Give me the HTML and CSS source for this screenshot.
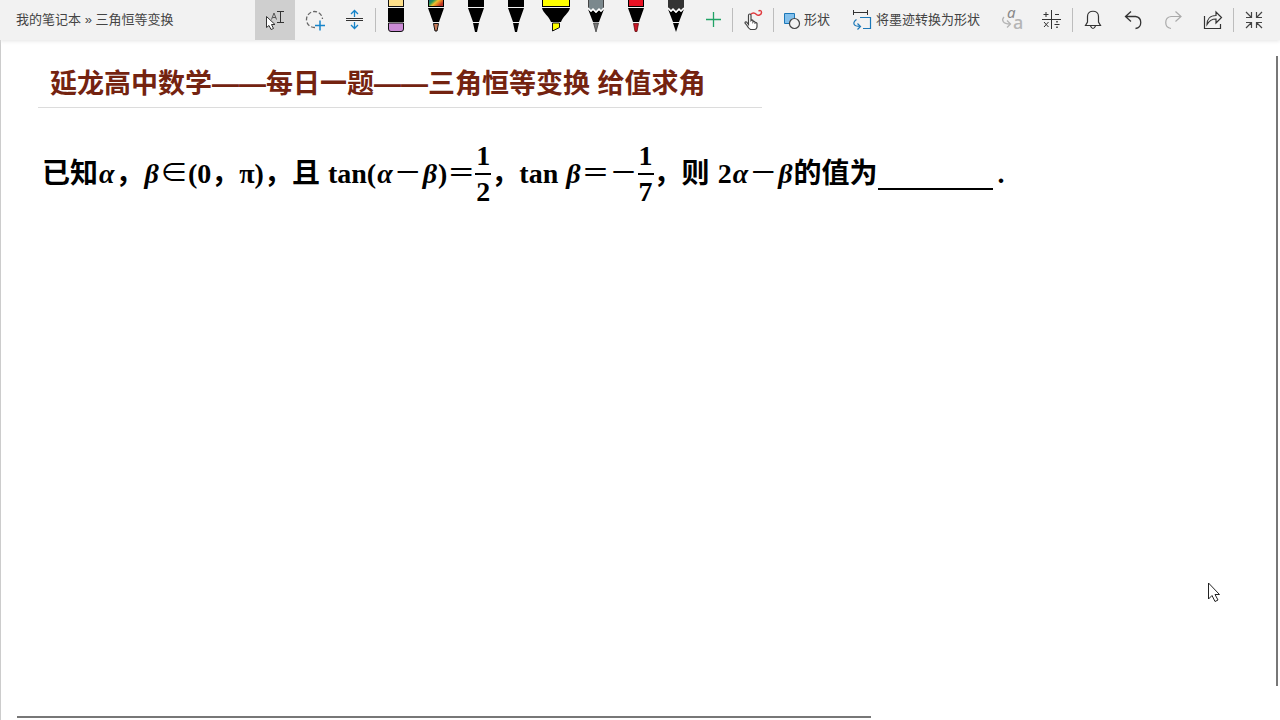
FILE: index.html
```html
<!DOCTYPE html>
<html lang="zh-CN">
<head>
<meta charset="utf-8">
<title>三角恒等变换</title>
<link rel="stylesheet" href="styles.css">
</head>
<body>
<header class="toolbar">
  <nav class="breadcrumb"><a href="#">我的笔记本</a> » <a href="#">三角恒等变换</a></nav>
  <button class="tool selected" aria-label="选择文本"><svg width="40" height="40" viewBox="0 0 40 40" fill="none" stroke="#333"><path d="M16.500 19.500l2.500-6.500 2.500 6.500M17.500 17.500h3.500" stroke="#555"/><path d="M11.500 16.500v11l2.500-2 2 4 2.500-1-2-4h3.500z" fill="#fff"/><path d="M22 11.500h7M22 22.500h7M25.500 11.500v11"/></svg></button>
  <button class="tool" aria-label="套索选择"><svg width="40" height="40" viewBox="0 0 40 40" fill="none"><circle cx="19.500" cy="19.500" r="8" stroke="#666" stroke-width="1.300" stroke-dasharray="4 2"/><path d="M20 19h10v11H20z" fill="#f2f2f2"/><path d="M25 20.500v10M20 25.500h10" stroke="#1684c9" stroke-width="1.500"/></svg></button>
  <button class="tool" aria-label="插入空间"><svg width="40" height="40" viewBox="0 0 40 40" fill="none"><path d="M11 18.500h17M11 20.500h17" stroke="#333"/><path d="M19.500 17v-6.500M16 14l3.500-3.500L23 14M19.500 22v6.500M16 25l3.500 3.500L23 25" stroke="#1684c9" stroke-width="1.300"/></svg></button>
  <span class="sep"></span>
  <button class="tool" aria-label="橡皮擦"><svg width="40" height="40" viewBox="0 0 40 40"><path d="M12 0h16v7H12z" fill="#111"/><path d="M13 0h14v6H13z" fill="#ffe08a"/><path d="M12 8h16v14H12z"/><path d="M12.500 23h15v6q0 2.500-2.500 2.500H15q-2.500 0-2.500-2.500z" fill="#cb8bd6" stroke="#111"/></svg></button>
  <button class="tool" aria-label="彩虹笔"><svg width="40" height="40" viewBox="0 0 40 40"><defs><linearGradient id="rainbow" x1="0" x2="1" y1="0" y2=".5"><stop stop-color="#1c6188"/><stop offset=".3" stop-color="#2c9a55"/><stop offset=".55" stop-color="#f0c02b"/><stop offset=".8" stop-color="#e06c25"/><stop offset="1" stop-color="#b93327"/></linearGradient></defs><path d="M12 0h16v7H12z"/><path d="M13 0h14v6H13z" fill="url(#rainbow)"/><path d="M12 8h16l-5 14h-6z"/><path d="M17.500 23.500h5L21 31h-2z" fill="#c77a58" stroke="#111"/></svg></button>
  <button class="tool" aria-label="黑色笔一"><svg width="40" height="40" viewBox="0 0 40 40"><path d="M12 0h16v7H12zM12 8h16l-5 14h-6zM17 23h6l-2 9h-2z"/></svg></button>
  <button class="tool" aria-label="黑色笔二"><svg width="40" height="40" viewBox="0 0 40 40"><path d="M12 0h16v7H12zM12 8h16l-5 14h-6zM17 23h6l-2 9h-2z"/></svg></button>
  <button class="tool" aria-label="黄色荧光笔"><svg width="40" height="40" viewBox="0 0 40 40"><path d="M6 0h28v7H6z"/><path d="M7 0h26v6H7z" fill="#ff0"/><path d="M6 8h28c-1 5-7 8-9 14H15C13 16 7 13 6 8z"/><path d="M16.500 23v8l7-3.500V23z" fill="#ff0" stroke="#111"/></svg></button>
  <button class="tool" aria-label="灰色铅笔"><svg width="40" height="40" viewBox="0 0 40 40"><path d="M12 0h16v8l-3 3-2-2-3 3-3-3-2 2-3-3z" fill="#7b888d"/><path d="M12.500 0v8M27.500 0v8" stroke="#444"/><path d="M12 9l3 3 2-2 3 3 3-3 2 2 3-3-5 13h-6z"/><path d="M12 8l3 3 2-2 3 3 3-3 2 2 3-3" fill="none" stroke="#fff" stroke-width="1.500"/><path d="M17.500 23h5L20 32z" fill="#777" stroke="#333" stroke-width=".7"/></svg></button>
  <button class="tool" aria-label="红色笔"><svg width="40" height="40" viewBox="0 0 40 40"><path d="M12 0h16v7H12z"/><path d="M13 0h14v6H13z" fill="#e81123"/><path d="M12 8h16l-5 14h-6z"/><path d="M17.500 23.500h5L21 31.500h-2z" fill="#c91626" stroke="#500" stroke-width=".7"/></svg></button>
  <button class="tool" aria-label="黑色铅笔"><svg width="40" height="40" viewBox="0 0 40 40"><path d="M12 0h16v8l-3 3-2-2-3 3-3-3-2 2-3-3z" fill="#333"/><path d="M12 9l3 3 2-2 3 3 3-3 2 2 3-3-5 13h-6zM17 23h6l-3 9z"/><path d="M12 8l3 3 2-2 3 3 3-3 2 2 3-3" fill="none" stroke="#fff" stroke-width="1.500"/></svg></button>
  <button class="tool add" aria-label="添加笔"><svg width="36" height="40" viewBox="0 0 36 40"><path d="M10 19.500h15M17.500 12v15" stroke="#21a366" stroke-width="1.300"/></svg></button>
  <span class="sep"></span>
  <button class="tool" aria-label="用手指绘制"><svg width="40" height="40" viewBox="0 0 40 40" fill="none"><path d="M17.500 14.500c2.500-2.500 4.500-1.500 6 0s5 .5 5-2-2-2-3-1.500" stroke="#e03a3e" stroke-width="1.500"/><path d="M15.500 24.500v-9q0-1.500 1.200-1.500t1.300 1.500v5q1-1 2 0v1.500q1-1.500 2 0v1q1.500-1 2 .5v3.500q-.5 2.500-2.500 2.500h-4q-2-1-3.500-4l-2-2.500q0-1.500 1.500-1z" fill="#fff" stroke="#444" stroke-width="1.200"/></svg></button>
  <span class="sep"></span>
  <button class="tool labelled shapes"><svg width="20" height="20" viewBox="0 0 20 20" fill="none"><path d="M2.500 3.500h10v10h-10z" fill="#83c0ec" stroke="#1c78b8"/><circle cx="12.500" cy="13.500" r="5" fill="#f2f2f2" stroke="#444" stroke-width="1.200"/></svg><span>形状</span></button>
  <button class="tool labelled convert"><svg width="20" height="20" viewBox="0 0 20 20" fill="none"><path d="M1.500 0v5M15.500 0v5M1.500 2.500h14" stroke="#333"/><path d="M8 7.500h10.500v11H11M4.500 9.500c-4 3-4 7 4 7M5.500 13.500l3 3-3 3" stroke="#1c78b8" stroke-width="1.200"/></svg><span>将墨迹转换为形状</span></button>
  <button class="tool" disabled aria-label="将墨迹转换为文本"><svg width="40" height="40" viewBox="0 0 40 40" fill="none"><text class="italic-a" x="15" y="18">a</text><text class="plain-a" x="21" y="29">a</text><path d="M12 17c-3 3-1 7 6 7M15 20.500l3.500 3.500-3.500 3.500" stroke="#b5b5b5" stroke-width="1.300"/></svg></button>
  <button class="tool" aria-label="数学"><svg width="40" height="40" viewBox="0 0 40 40" fill="none" stroke="#333"><path d="M10 19.500h19M19.500 10v19M11.500 14.500h5M14 12v5M23 14.500h4M12 22l4.500 5M16.500 22L12 27M22.500 24.500h5"/><path d="M25 21v1.500M25 26.500V28" stroke-width="1.500"/></svg></button>
  <span class="sep"></span>
  <button class="tool" aria-label="通知"><svg width="40" height="40" viewBox="0 0 40 40" fill="none" stroke="#333" stroke-width="1.200"><path d="M12.500 25.500h15l-2-3.500v-5.500c0-7-11-7-11 0V22zM17.500 26q2.500 5 5 0"/></svg></button>
  <button class="tool" aria-label="撤消"><svg width="40" height="40" viewBox="0 0 40 40" fill="none" stroke="#333" stroke-width="1.300"><path d="M18 11.500l-5.500 5 5.500 5M13 16.500h9.500c7 1 7 11 0 12"/></svg></button>
  <button class="tool" disabled aria-label="恢复"><svg width="40" height="40" viewBox="0 0 40 40" fill="none" stroke="#aaa" stroke-width="1.200"><path d="M22.500 11.500l5.500 5-5.500 5M27.500 16.500H18c-7 1-7 11 0 12"/></svg></button>
  <button class="tool" aria-label="共享"><svg width="40" height="40" viewBox="0 0 40 40" fill="none" stroke="#333" stroke-width="1.200"><path d="M11.500 16v12.500h16V24M14 24.500c0-5 3-9 9-9V12l5.500 5.500-5.500 5.500v-4c-4 0-6.500 1-9 5.500z"/></svg></button>
  <span class="sep"></span>
  <button class="tool" aria-label="退出全屏"><svg width="40" height="40" viewBox="0 0 40 40" fill="none" stroke="#444" stroke-width="1.200"><path d="M12 12l5 5M17.500 12v5.500H12M28 12l-5 5M22.500 12v5.500H28M12 28l5-5M12 22.500h5.500V28M28 28l-5-5M28 22.500h-5.500V28"/></svg></button>
</header>
<main class="workspace">
  <article class="page">
    <h1 class="title">延龙高中数学——每日一题——三角恒等变换 给值求角</h1>
    <p class="problem"><span>已知<i>α</i>，<i>β</i><span class="sym">∈</span>(0，π)，且</span><span class="word">tan(<i>α</i><span class="sym">－</span><i>β</i>)<span class="sym">＝</span></span><span class="frac"><span>1</span><span class="den">2</span></span><span>，</span><span>tan <i>β</i><span class="sym">＝－</span></span><span class="frac"><span>1</span><span class="den">7</span></span><span>，则</span><span class="word">2<i>α</i><span class="sym">－</span><i>β</i>的值为</span><span class="blank"></span><span class="stop">.</span></p>
  </article>
  <div class="track-y"></div>
  <div class="track-x"></div>
  <svg class="pointer" width="14" height="22" viewBox="0 0 14 22"><path d="M1.500 1v16l3.500-3.500 3 6 3-1.500-3-5.500h4.500z" fill="#fff" stroke="#222"/></svg>
</main>
</body>
</html>
```
FILE: styles.css
```css
* { box-sizing: border-box; }
body {
  margin: 0;
  min-height: 100vh;
  display: flex;
  flex-direction: column;
  background: #fff;
  color: #444;
  font: 13px/20px "Liberation Sans", "Noto Sans CJK SC", sans-serif;
}
.toolbar {
  display: flex;
  height: 40px;
  padding-right: 6px;
  background: #f2f2f2;
  box-shadow: 0 1px 4px #e4e4e4;
  position: relative;
  z-index: 1;
}
.breadcrumb {
  flex: 1;
  padding: 10px 0 10px 16px;
  white-space: nowrap;
}
.breadcrumb a { color: inherit; text-decoration: none; }
.tool {
  flex: 0 0 40px;
  height: 40px;
  padding: 0;
  border: 0;
  background: none;
  color: #444;
  font: inherit;
}
.tool svg { display: block; }
.tool.selected { background: #cfcfcf; }
.tool.add { flex-basis: 36px; }
.tool.labelled {
  display: flex;
  align-items: center;
  white-space: nowrap;
}
.tool.shapes { flex-basis: 68px; padding-left: 8px; gap: 2px; }
.tool.convert { flex-basis: 150px; padding-left: 10px; gap: 4px; }
.sep {
  flex: 0 0 1px;
  height: 24px;
  margin-top: 8px;
  background: #bdbdbd;
}
.italic-a { font: italic 15px "Noto Sans", sans-serif; fill: #888; }
.plain-a { font: 500 18px "Noto Sans", sans-serif; fill: #b5b5b5; }
.workspace {
  flex: 1;
  display: grid;
  grid-template-columns: 1fr 2px;
  grid-template-rows: 1fr 34px;
  padding-right: 2px;
  border-left: 1px solid #ccc;
  position: relative;
}
.page { padding: 24px 37px 0; }
.title {
  width: fit-content;
  margin: 0;
  padding: 0 56px 3px 12px;
  border-bottom: 1px solid #dcdcdc;
  color: #742310;
  font: bold 27px/40px "Liberation Sans", "Noto Sans CJK SC", sans-serif;
}
.problem {
  display: flex;
  align-items: center;
  margin: 31px 0 0 4px;
  color: #000;
  font: bold 28px/32px "Liberation Serif", "Noto Sans CJK SC", serif;
  white-space: nowrap;
}
.problem i { margin: 0 1px; }
.sym {
  font-family: "Noto Sans CJK SC", sans-serif;
  font-weight: 400;
  line-height: 0;
}
.word { margin-left: 8px; }
.frac {
  display: grid;
  width: 16px;
  line-height: 34px;
  text-align: center;
}
.den { border-top: 2px solid #000; }
.blank {
  width: 115px;
  height: 32px;
  border-bottom: 2px solid #000;
}
.stop { margin-left: 5px; }
.track-y { margin-top: 16px; background: #777; }
.track-x {
  width: 67%;
  height: 2px;
  margin: 30px 0 0 16px;
  background: #777;
}
.pointer { position: absolute; right: 59px; bottom: 116px; }
```
